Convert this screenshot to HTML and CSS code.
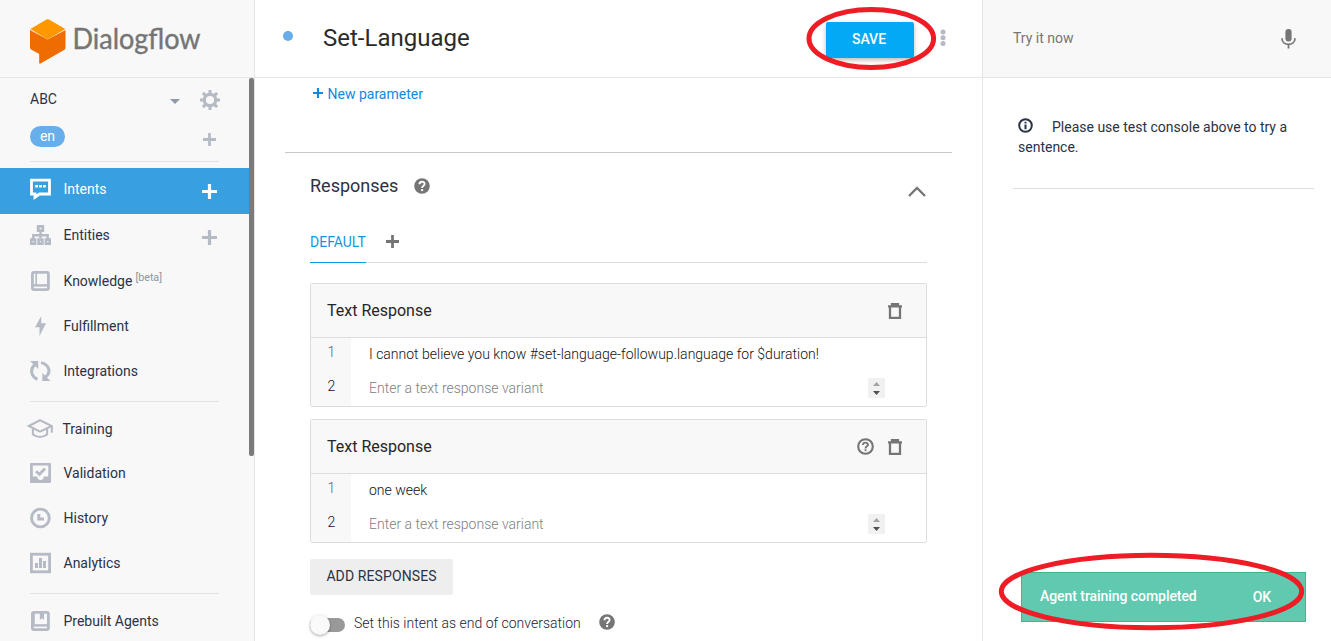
FILE: index.html
```html
<!DOCTYPE html>
<html lang="en">
<head>
<meta charset="utf-8">
<title>Dialogflow</title>
<link rel="stylesheet" href="styles.css">
</head>
<body>
<svg class="defs" width="0" height="0">
  <symbol id="plus" viewBox="0 0 14 14"><path d="M7 0v14M0 7h14" fill="none" stroke="currentColor" stroke-width="3"/></symbol>
  <symbol id="trash" viewBox="0 0 14 16"><path d="M2 3.5V15H12V3.5M0 3.3H14M4 2.5V1H10V2.5" fill="none" stroke="currentColor" stroke-width="2.3"/></symbol>
  <symbol id="help" viewBox="0 0 16 16"><circle cx="8" cy="8" r="7.8" fill="currentColor"/><path d="M5.5 6.3C5.5 3 10.6 3 10.6 6.1C10.6 7.9 8.1 7.8 8.1 10" fill="none" stroke="#fff" stroke-width="1.9"/><path d="M7.1 11.1h2v2h-2z" fill="#fff"/></symbol>
  <symbol id="help-line" viewBox="0 0 17 17"><circle cx="8.5" cy="8.5" r="7.3" fill="none" stroke="currentColor" stroke-width="2.1"/><path d="M6 6.9C6 3.9 11 3.9 11 6.8C11 8.4 8.5 8.3 8.5 10.4" fill="none" stroke="currentColor" stroke-width="1.9"/><path d="M7.6 11.3h1.8v1.8H7.6z" fill="currentColor"/></symbol>
</svg>
<div class="app">
  <aside class="sidebar">
    <div class="brand">
      <svg width="176" height="50" viewBox="0 0 176 50">
        <path d="M0 11L17.7 20.5L35.5 11V28.5Q35.5 30 34 31L10.5 44.5Q9.2 45.2 9.2 43.5V35L1.5 30.8Q0 30 0 28.5Z" fill="#ef6c00"/>
        <path d="M.3 10L16.5.5Q17.7 0 19 .5L35.3 10L17.7 20.5Z" fill="#ff9800"/>
        <text class="brand-name" x="42.5" y="30" textLength="128" lengthAdjust="spacingAndGlyphs">Dialogflow</text>
      </svg>
    </div>
    <div class="agent">
      <span class="agent-name">ABC</span>
      <svg class="caret" width="10" height="5" viewBox="0 0 10 5"><path d="M0 0H10L5 5Z" fill="#8f98a8"/></svg>
      <svg class="gear" width="20" height="20" viewBox="0 0 20 20" fill="none" stroke="#b5bac5"><circle cx="10" cy="10" r="5.7" stroke-width="3.2"/><path d="M10 0V4M10 16V20M0 10H4M16 10H20M2.9 2.9L5.7 5.7M14.3 14.3L17.1 17.1M17.1 2.9L14.3 5.7M5.7 14.3L2.9 17.1" stroke-width="3"/></svg>
    </div>
    <div class="lang"><span class="pill">en</span><svg class="muted" width="13" height="13"><use href="#plus"/></svg></div>
    <hr class="rule">
    <nav class="nav">
      <a class="item active">
        <svg width="22" height="22" viewBox="0 0 22 22"><path d="M1.5 2.2H19.5V16H9.5L5 19.2V16H1.5Z" fill="none" stroke="currentColor" stroke-width="2.8"/><path d="M5.2 7h2.8v2.6H5.2zM9.1 7h2.8v2.6H9.1zM13 7h2.8v2.6H13z" fill="currentColor"/></svg>
        <span>Intents</span><svg class="add" width="15" height="15"><use href="#plus"/></svg></a>
      <a class="item">
        <svg width="22" height="22" viewBox="0 0 22 22"><path d="M10.5 7V14M3.3 15V11.2H17.7V15" fill="none" stroke="currentColor" stroke-width="2.4"/><path d="M8.2 2.4h4.6v4.2H8.2z" fill="none" stroke="currentColor" stroke-width="2.8"/><path d="M0 14.2h6.4v6.8H0zM7.3 14.2h6.4v6.8H7.3zM14.6 14.2H21v6.8h-6.4z" fill="currentColor"/><path d="M2.6 17h1.2v1.2H2.6zM9.9 17h1.2v1.2H9.9zM17.2 17h1.2v1.2h-1.2z" fill="#f8f8f8"/></svg>
        <span>Entities</span><svg class="add" width="15" height="15"><use href="#plus"/></svg></a>
      <a class="item">
        <svg width="22" height="22" viewBox="0 0 22 22" fill="none" stroke="currentColor"><rect x="2.4" y="2.4" width="16" height="17.2" rx="1.5" stroke-width="2.8"/><path d="M6.2 2.5V15" stroke-width="1.6"/><path d="M3 15.4H18.5" stroke-width="2.4"/></svg>
        <span>Knowledge<sup>[beta]</sup></span></a>
      <a class="item short">
        <svg width="22" height="22" viewBox="0 0 22 22"><path d="M11.2 1V8.2H16L9.5 21V12.3H5Z" fill="currentColor"/></svg>
        <span>Fulfillment</span></a>
      <a class="item">
        <svg width="22" height="22" viewBox="0 0 22 22"><path d="M7.5 19.3C.5 16 -.3 8.5 5.3 4.6M15.3 17C21.3 13 19.8 4.5 11 2.6" fill="none" stroke="currentColor" stroke-width="3"/><path d="M0 1H8.2V9ZM20.5 21H12.3V13Z" fill="currentColor"/></svg>
        <span>Integrations</span></a>
      <hr class="rule spaced">
      <a class="item low">
        <svg class="cap" width="26" height="22" viewBox="0 0 26 22" fill="none" stroke="currentColor" stroke-width="2.1"><path d="M1.9 8L13 2.2L24.8 8L13 13.6Z"/><path d="M5.9 10.3V16.5Q13 21.5 20.1 16.5V10.3M24.8 8V14.8"/></svg>
        <span>Training</span></a>
      <a class="item low up">
        <svg width="22" height="22" viewBox="0 0 22 22"><path fill-rule="evenodd" d="M1 1H20Q21 1 21 2V20Q21 21 20 21H1Q0 21 0 20V2Q0 1 1 1ZM2.8 3.6V14.5H7.2Q7.5 18 10.5 18T13.8 14.5H18.3V3.6Z" fill="currentColor"/><path d="M6 9.3L9.5 12.3L15 6.5" fill="none" stroke="currentColor" stroke-width="2.7"/></svg>
        <span>Validation</span></a>
      <a class="item low up">
        <svg width="22" height="22" viewBox="0 0 22 22" fill="none" stroke="currentColor"><circle cx="10.4" cy="11" r="8.9" stroke-width="2.9"/><path d="M8.8 7V12H14" stroke-width="3"/></svg>
        <span>History</span></a>
      <a class="item low up">
        <svg width="22" height="22" viewBox="0 0 22 22"><rect x="1.4" y="2.2" width="18.2" height="17.6" fill="none" stroke="currentColor" stroke-width="2.8"/><path d="M5 11h3v5H5zM9 6h3v10H9zM13 9h3v7h-3z" fill="currentColor"/></svg>
        <span>Analytics</span></a>
      <hr class="rule spaced">
      <a class="item low">
        <svg width="22" height="22" viewBox="0 0 22 22"><rect x="2.4" y="2.4" width="16" height="17.2" rx="1.5" fill="none" stroke="currentColor" stroke-width="2.8"/><path d="M3 15.4H18.5" stroke="currentColor" stroke-width="2.4"/><path d="M9.8 2H14V10L11.9 8.3L9.8 10Z" fill="currentColor"/><path d="M2 2h2.8v13H2z" fill="currentColor"/></svg>
        <span>Prebuilt Agents</span></a>
    </nav>
    <div class="scrollbar"></div>
  </aside>

  <main class="main">
    <header class="title-bar">
      <span class="dot"></span>
      <h1>Set-Language</h1>
      <button class="save">SAVE</button>
      <svg class="more" width="6" height="18" viewBox="0 0 6 18" fill="#b5bac5"><circle cx="3" cy="3" r="2.5"/><circle cx="3" cy="8.7" r="2.5"/><circle cx="3" cy="14.4" r="2.5"/></svg>
    </header>
    <div class="new-param"><svg width="10" height="10"><use href="#plus"/></svg><span>New parameter</span></div>
    <section class="responses">
      <div class="section-head">
        <h2>Responses</h2>
        <svg class="icon" width="16" height="16"><use href="#help"/></svg>
        <svg class="chevron" width="18" height="11" viewBox="0 0 18 11"><path d="M1 10L9 2L17 10" fill="none" stroke="#757575" stroke-width="2.3"/></svg>
      </div>
      <div class="tabs"><span class="tab">DEFAULT</span><svg class="icon" width="13" height="13"><use href="#plus"/></svg></div>
      <article class="card">
        <header class="card-head"><h3>Text Response</h3><svg class="icon" width="14" height="16"><use href="#trash"/></svg></header>
        <div class="line"><span class="num">1</span><p>I cannot believe you know #set-language-followup.language for $duration!</p></div>
        <div class="line"><span class="num current">2</span><p class="placeholder">Enter a text response variant</p>
          <svg class="spin" width="17" height="20" viewBox="0 0 17 20"><path fill="#f1f1f1" d="M0 0h17v20H0z"/><path fill="#a3a3a3" d="M5 8H12L8.5 4Z"/><path fill="#505050" d="M5 13H12L8.5 17Z"/></svg></div>
      </article>
      <article class="card">
        <header class="card-head"><h3>Text Response</h3><svg class="icon" width="17" height="17"><use href="#help-line"/></svg><svg class="icon" width="14" height="16"><use href="#trash"/></svg></header>
        <div class="line"><span class="num">1</span><p>one week</p></div>
        <div class="line"><span class="num current">2</span><p class="placeholder">Enter a text response variant</p>
          <svg class="spin" width="17" height="20" viewBox="0 0 17 20"><path fill="#f1f1f1" d="M0 0h17v20H0z"/><path fill="#a3a3a3" d="M5 8H12L8.5 4Z"/><path fill="#505050" d="M5 13H12L8.5 17Z"/></svg></div>
      </article>
      <button class="add-responses">ADD RESPONSES</button>
      <div class="end-row">
        <span class="switch"><span class="knob"></span></span>
        <span class="end-label">Set this intent as end of conversation</span>
        <svg class="icon" width="16" height="16"><use href="#help"/></svg>
      </div>
    </section>
  </main>

  <aside class="console">
    <header class="try"><span>Try it now</span>
      <svg width="15" height="20" viewBox="0 0 15 20"><rect x="4.4" y="0" width="6.2" height="12.5" rx="3" fill="#757575"/><path d="M1 9.2C1 17.4 14 17.4 14 9.2M7.5 15.4V19.5" fill="none" stroke="#757575" stroke-width="1.8"/></svg>
    </header>
    <div class="hint">
      <svg width="15" height="15" viewBox="0 0 15 15"><circle cx="7.5" cy="7.5" r="6.3" fill="none" stroke="currentColor" stroke-width="2"/><path d="M6.5 3.7h2v1.8h-2zM6.5 6.4h2v4.8h-2z" fill="currentColor"/></svg>Please use test console above to try a sentence.
    </div>
  </aside>
</div>
<div class="toast"><span>Agent training completed</span><span class="ok">OK</span></div>
<svg class="marks" width="1331" height="641" fill="none" stroke="#ee1c25" stroke-width="5"><ellipse cx="871.3" cy="38.5" rx="62.3" ry="29"/><ellipse cx="1151.5" cy="591.5" rx="150.2" ry="36.2"/></svg>
</body>
</html>
```

FILE: styles.css
```css
* { box-sizing: border-box; }
body { margin: 0; width: 1331px; height: 641px; overflow: hidden; position: relative; font: 14px/20px Roboto, sans-serif; color: #2b3246; background: #fff; }
h1, h2, h3 { margin: 0; font-weight: 400; }
p { margin: 0; }
button { border: 0; font-family: inherit; padding: 0; }
svg { display: block; flex: none; }
.defs { position: absolute; }
.app { display: flex; height: 641px; }
.icon { color: #757575; }
.muted { color: #b5bac5; }

.sidebar { position: relative; width: 255px; flex: none; background: #f8f8f8; border-right: 1px solid #e5e5e5; overflow: hidden; }
.brand { height: 78px; padding: 19px 0 0 30px; border-bottom: 1px solid #e5e5e5; }
.brand svg { overflow: visible; }
.brand-name { font: 28px Lato, sans-serif; fill: #757575; stroke: #757575; stroke-width: .4px; }
.agent { display: flex; align-items: center; height: 44px; padding: 0 34px 0 30px; }
.agent-name { flex: 1; padding-bottom: 2px; }
.caret { margin: 2px 20px 0 0; }
.lang { display: flex; align-items: center; justify-content: space-between; height: 39px; padding: 0 38px 10px 30px; }
.lang svg { margin-top: 5px; }
.pill { width: 35px; height: 21px; border-radius: 11px; background: #67aeea; color: #fff; text-align: center; line-height: 20px; }
.rule { width: 189px; height: 1px; margin: 0 0 0 30px; border: 0; background: #e2e2e2; }
.rule.spaced { margin: 7px 0 4px 30px; }
.nav { padding-top: 6px; }
.item { display: flex; align-items: center; height: 46px; padding: 0 37px 0 30px; color: #b5bac5; }
.item span { flex: 1; margin-left: 11.5px; color: #2b3246; white-space: nowrap; }
.item.active { height: 46px; margin-bottom: -2px; padding-bottom: 4px; background: #389fe0; color: #fff; }
.item.active span { color: #fff; }
.item .add { margin: 5px 0 0; }
.item.short { height: 44px; }
.item.low { height: 45px; }
.item.low.up { padding-bottom: 2px; }
.item .cap { margin: 0 -2px 0 -3px; }
.item sup { margin-left: 3px; font-size: 10.7px; line-height: 0; vertical-align: 5px; color: #8d95a3; }
.scrollbar { position: absolute; right: 0; top: 78px; width: 5px; height: 378px; border-radius: 2px; background: #7b7b7b; }

.main { width: 727px; flex: none; }
.title-bar { display: flex; align-items: center; height: 78px; padding: 0 0 2px 28px; border-bottom: 1px solid #e5e5e5; }
.dot { width: 10px; height: 10px; margin: 0 30px 4px 0; border-radius: 50%; background: #67aeea; }
h1 { width: 503px; font-size: 24px; line-height: 30px; color: #2b2b2b; }
.save { width: 88px; height: 36px; margin-top: 5px; padding: 0 2px 2px 0; border-radius: 2px; background: #03a9f4; color: #fff; font-size: 14px; font-weight: 500; box-shadow: 0 2px 5px rgba(0,0,0,.28); }
.more { margin-left: 26px; }
.new-param { display: flex; align-items: center; gap: 5px; height: 32px; padding-left: 57.5px; color: #1489dc; }
.new-param svg { margin-bottom: 2px; }
.responses { margin: 42px 30px 0; padding: 0 25px; border-top: 1px solid #ccc5c8; }
.section-head { display: flex; align-items: center; height: 67px; padding: 0 1px 2px 0; }
h2 { width: 103.5px; font-size: 18px; line-height: 24px; }
.chevron { margin: 12px 0 0 auto; }
.tabs { display: flex; align-items: center; height: 43px; gap: 20.5px; border-bottom: 1px solid #ddd; }
.tab { height: 43px; line-height: 44px; border-bottom: 1px solid #039be5; color: #1296e2; font-size: 14px; }
.card { height: 124px; border: 1px solid #ddd; border-radius: 2px; }
.tabs + .card { margin: 20px 0 12px; }
.card-head { display: flex; align-items: center; gap: 14px; height: 54px; padding: 0 24px 0 16px; background: #f8f8f8; border-bottom: 1px solid #ddd; }
h3 { flex: 1; font-size: 16px; color: #262626; }
.line { display: flex; align-items: center; height: 34px; color: #262626; font-weight: 300; }
.num { align-self: stretch; width: 40px; padding: 4px 0 0 16.5px; background: #f8f8f8; color: #666; }
.num.current { color: #111; }
.line p { flex: 1; padding: 0 0 2px 18px; color: #111; }
.line .placeholder { color: #808080; }
.spin { margin: 0 41px 2px 0; }
.add-responses { display: block; width: 143px; height: 36px; margin-top: 16px; padding-bottom: 2px; border-radius: 2px; background: #eee; color: #2b3246; font-size: 14px; letter-spacing: .1px; }
.end-row { display: flex; align-items: center; margin-top: 18px; height: 20px; font-weight: 300; color: #1c2236; }
.end-row .icon { margin-bottom: 2px; }
.switch { position: relative; width: 35px; height: 14px; margin-top: 3px; border-radius: 7px; background: #999; }
.knob { position: absolute; left: 0; top: -3px; width: 20px; height: 20px; border-radius: 50%; background: #fafafa; box-shadow: 0 1px 3px rgba(0,0,0,.35); }
.end-label { width: 244.5px; margin-left: 9px; white-space: nowrap; }

.console { flex: 1; border-left: 1px solid #e5e5e5; }
.try { display: flex; justify-content: space-between; align-items: center; height: 78px; padding: 0 35px 2px 30px; background: #f8f8f8; border-bottom: 1px solid #e5e5e5; color: #757575; }
.try svg { margin-top: 2px; }
.hint { height: 111px; margin: 0 17px 0 30px; padding: 39px 20px 0 5px; border-bottom: 1px solid #ddd; }
.hint svg { display: inline-block; margin-right: 19px; vertical-align: -1px; }

.toast { position: absolute; left: 1021px; top: 572px; width: 285px; height: 50px; padding: 0 34px 2px 18px; display: flex; justify-content: space-between; align-items: center; background: #60c9b0; border: 1px solid #41b883; color: #fff; font-weight: 500; letter-spacing: -.06px; }
.ok { padding-top: 2px; }
.marks { position: absolute; left: 0; top: 0; pointer-events: none; }
```
